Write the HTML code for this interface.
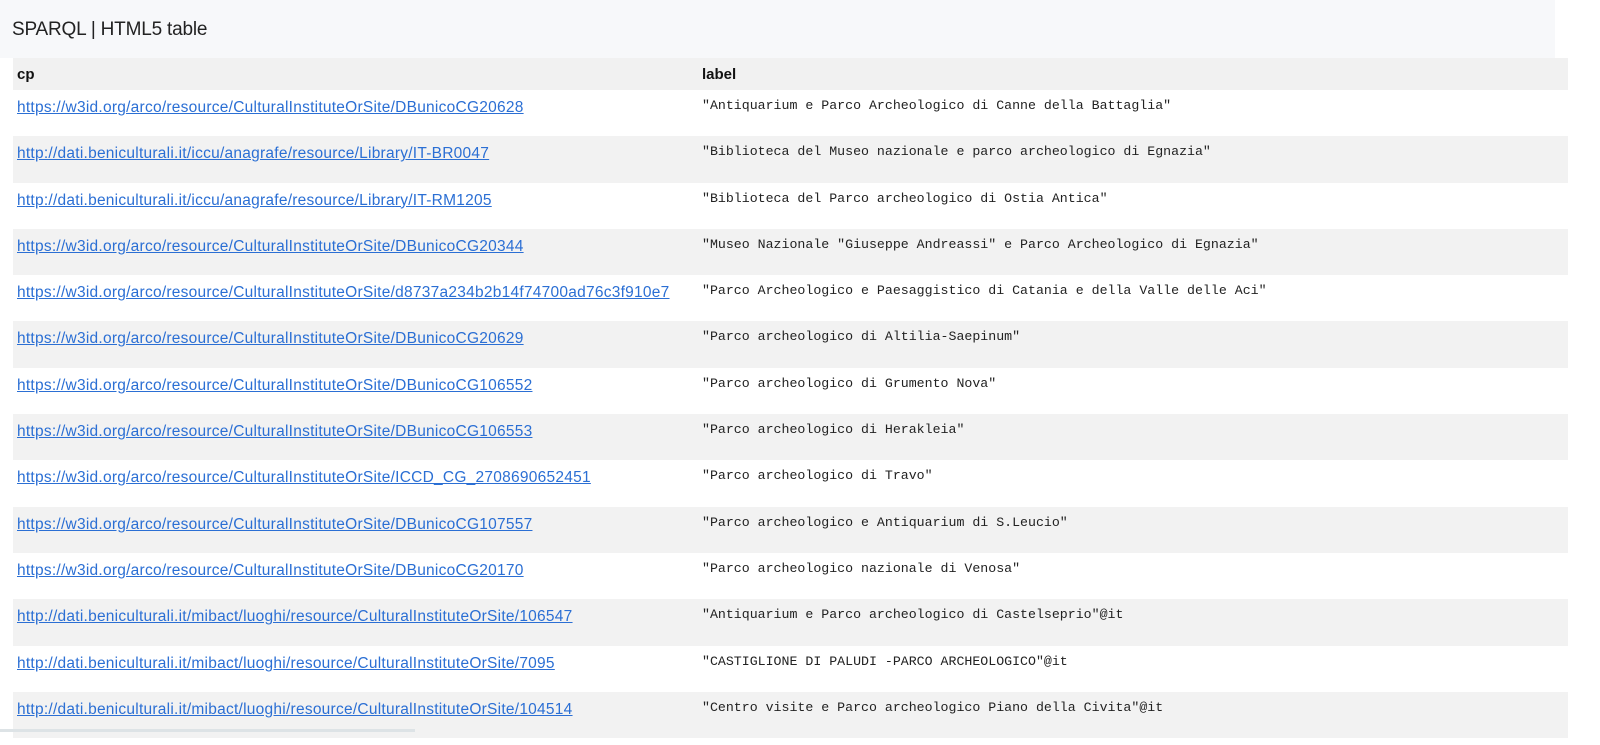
<!DOCTYPE html>
<html><head><meta charset="utf-8"><style>
html,body{margin:0;padding:0;background:#fff;width:1600px;height:745px;overflow:hidden}
.hd{position:absolute;left:0;top:0;width:1555px;height:58px;background:#f7f8fa;}
.hd span{position:absolute;left:12px;top:19px;font:19px "Liberation Sans",sans-serif;color:#222;letter-spacing:-0.2px}
table{position:absolute;left:13px;top:58px;width:1555px;border-collapse:collapse;}
th{height:32px;background:#f1f1f1;text-align:left;font:bold 15px "Liberation Sans",sans-serif;color:#111;padding:0 0 0 4px;vertical-align:middle}
td{height:46.3px;padding:0 0 0 4px;vertical-align:top;box-sizing:border-box}
tr:nth-child(odd) td{background:#f2f2f2}
td.a{width:681px;padding-top:9px}
td.a a{font:15.5px "Liberation Sans",sans-serif;color:#2b6fd4;text-decoration:underline;letter-spacing:0.25px}
td.b{font:13.25px "Liberation Mono",monospace;color:#222;padding-top:8px}
.sb{position:absolute;left:0;top:729px;width:415px;height:3px;background:#dde3e6}
</style></head><body>
<div class="hd"><span>SPARQL | HTML5 table</span></div>
<table>
<tr><th style="width:681px">cp</th><th>label</th></tr>
<tr><td class="a"><a>https://w3id.org/arco/resource/CulturalInstituteOrSite/DBunicoCG20628</a></td><td class="b">"Antiquarium e Parco Archeologico di Canne della Battaglia"</td></tr>
<tr><td class="a"><a>http://dati.beniculturali.it/iccu/anagrafe/resource/Library/IT-BR0047</a></td><td class="b">"Biblioteca del Museo nazionale e parco archeologico di Egnazia"</td></tr>
<tr><td class="a"><a>http://dati.beniculturali.it/iccu/anagrafe/resource/Library/IT-RM1205</a></td><td class="b">"Biblioteca del Parco archeologico di Ostia Antica"</td></tr>
<tr><td class="a"><a>https://w3id.org/arco/resource/CulturalInstituteOrSite/DBunicoCG20344</a></td><td class="b">"Museo Nazionale "Giuseppe Andreassi" e Parco Archeologico di Egnazia"</td></tr>
<tr><td class="a"><a>https://w3id.org/arco/resource/CulturalInstituteOrSite/d8737a234b2b14f74700ad76c3f910e7</a></td><td class="b">"Parco Archeologico e Paesaggistico di Catania e della Valle delle Aci"</td></tr>
<tr><td class="a"><a>https://w3id.org/arco/resource/CulturalInstituteOrSite/DBunicoCG20629</a></td><td class="b">"Parco archeologico di Altilia-Saepinum"</td></tr>
<tr><td class="a"><a>https://w3id.org/arco/resource/CulturalInstituteOrSite/DBunicoCG106552</a></td><td class="b">"Parco archeologico di Grumento Nova"</td></tr>
<tr><td class="a"><a>https://w3id.org/arco/resource/CulturalInstituteOrSite/DBunicoCG106553</a></td><td class="b">"Parco archeologico di Herakleia"</td></tr>
<tr><td class="a"><a>https://w3id.org/arco/resource/CulturalInstituteOrSite/ICCD_CG_2708690652451</a></td><td class="b">"Parco archeologico di Travo"</td></tr>
<tr><td class="a"><a>https://w3id.org/arco/resource/CulturalInstituteOrSite/DBunicoCG107557</a></td><td class="b">"Parco archeologico e Antiquarium di S.Leucio"</td></tr>
<tr><td class="a"><a>https://w3id.org/arco/resource/CulturalInstituteOrSite/DBunicoCG20170</a></td><td class="b">"Parco archeologico nazionale di Venosa"</td></tr>
<tr><td class="a"><a>http://dati.beniculturali.it/mibact/luoghi/resource/CulturalInstituteOrSite/106547</a></td><td class="b">"Antiquarium e Parco archeologico di Castelseprio"@it</td></tr>
<tr><td class="a"><a>http://dati.beniculturali.it/mibact/luoghi/resource/CulturalInstituteOrSite/7095</a></td><td class="b">"CASTIGLIONE DI PALUDI -PARCO ARCHEOLOGICO"@it</td></tr>
<tr><td class="a"><a>http://dati.beniculturali.it/mibact/luoghi/resource/CulturalInstituteOrSite/104514</a></td><td class="b">"Centro visite e Parco archeologico Piano della Civita"@it</td></tr>
</table>
<div class="sb"></div>
</body></html>
